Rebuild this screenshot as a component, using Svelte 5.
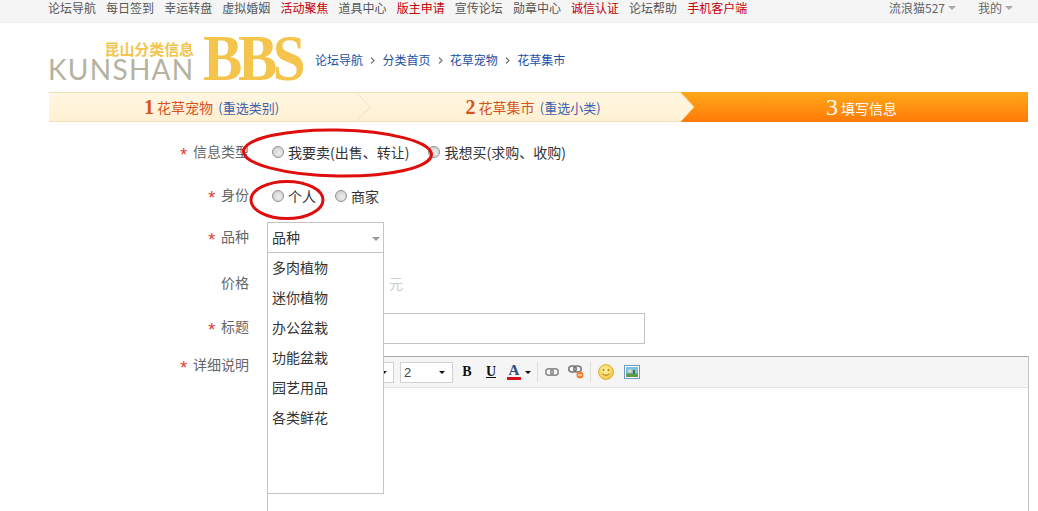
<script>
  const nav = [
    ['论坛导航', 0], ['每日签到', 0], ['幸运转盘', 0], ['虚拟婚姻', 0], ['活动聚焦', 1], ['道具中心', 0],
    ['版主申请', 1], ['宣传论坛', 0], ['勋章中心', 0], ['诚信认证', 1], ['论坛帮助', 0], ['手机客户端', 1]
  ];
  const crumbs = ['论坛导航', '分类首页', '花草宠物', '花草集市'];
  const options = ['多肉植物', '迷你植物', '办公盆栽', '功能盆栽', '园艺用品', '各类鲜花'];
</script>

<div class="page">
  <header class="topbar">
    <nav class="nav">
      {#each nav as [label, hot]}
        <span class:hot>{label}</span>
      {/each}
    </nav>
    <div class="user">
      <span class="menu">流浪猫527<i class="caret"></i></span>
      <span class="menu">我的<i class="caret"></i></span>
    </div>
  </header>

  <div class="brand">
    <div class="logo">
      <div class="logo-words">
        <span class="cn">昆山分类信息</span>
        <span class="en">KUNSHAN</span>
      </div>
      <span class="bbs">BBS</span>
    </div>
    <div class="crumbs">
      {#each crumbs as c, i}
        {#if i > 0}<svg class="sep" width="5" height="7" viewBox="0 0 5 7"><path d="M1 .5 4 3.5 1 6.5" fill="none" stroke="#777" stroke-width="1.2"/></svg>{/if}
        <span>{c}</span>
      {/each}
    </div>
  </div>

  <div class="steps">
    <div class="step one"><b>1</b> 花草宠物 <em>(重选类别)</em></div>
    <div class="step two"><b>2</b> 花草集市 <em>(重选小类)</em></div>
    <div class="step three"><b>3</b> 填写信息</div>
    <svg class="chev c1" width="16" height="30" viewBox="0 0 16 30"><path d="M0 0 14 15 0 30" fill="none" stroke="#f1e0bd"/></svg>
    <svg class="chev c2" width="16" height="30" viewBox="0 0 16 30"><path d="M0 0 14 15 0 30Z" fill="#fff4dc"/><path d="M0 0 14 15 0 30" fill="none" stroke="#f5dfb4"/></svg>
  </div>

  <form class="form">
    <div class="row r-type">
      <div class="label"><i>*</i> 信息类型</div>
      <div class="field">
        <label class="radio"><span class="dot"></span>我要卖(出售、转让)</label>
        <label class="radio"><span class="dot"></span>我想买(求购、收购)</label>
      </div>
    </div>
    <div class="row r-id">
      <div class="label"><i>*</i> 身份</div>
      <div class="field">
        <label class="radio"><span class="dot"></span>个人</label>
        <label class="radio second"><span class="dot"></span>商家</label>
      </div>
    </div>
    <div class="row r-kind">
      <div class="label"><i>*</i> 品种</div>
      <div class="field">
        <div class="select">品种<i class="caret dark"></i></div>
      </div>
    </div>
    <div class="row r-price">
      <div class="label">价格</div>
      <div class="field"><div class="price"></div><span class="unit">元</span></div>
    </div>
    <div class="row r-title">
      <div class="label"><i>*</i> 标题</div>
      <div class="field"><div class="title-input"></div></div>
    </div>
    <div class="row r-detail">
      <div class="label"><i>*</i> 详细说明</div>
      <div class="editor">
        <div class="toolbar">
          <div class="tsel small"><i class="caret black"></i></div>
          <div class="tsel size">2<i class="caret black"></i></div>
          <span class="tb b">B</span>
          <span class="tb u">U</span>
          <span class="tb a">A</span><i class="caret black acaret"></i>
          <span class="rule"></span>
          <svg class="ic link" width="14" height="8" viewBox="0 0 14 8"><rect x=".8" y=".8" width="7.400" height="6.400" rx="3" fill="none" stroke="#888" stroke-width="1.500"/><rect x="5.800" y=".8" width="7.400" height="6.400" rx="3" fill="none" stroke="#888" stroke-width="1.500"/></svg>
          <svg class="ic unlink" width="16" height="14" viewBox="0 0 16 14"><rect x=".8" y="1" width="7.400" height="6" rx="3" fill="none" stroke="#777" stroke-width="1.500"/><rect x="5.800" y="1" width="7.400" height="6" rx="3" fill="none" stroke="#777" stroke-width="1.500"/><circle cx="12" cy="10" r="3.500" fill="#ee8133"/><path d="M10 10h4" stroke="#fff"/></svg>
          <span class="rule"></span>
          <svg class="ic smile" width="16" height="16" viewBox="0 0 16 16"><defs><radialGradient id="sm" cx=".45" cy=".4" r=".7"><stop offset="0" stop-color="#fff6a8"/><stop offset="1" stop-color="#f3bd2c"/></radialGradient></defs><circle cx="8" cy="8" r="7.500" fill="url(#sm)" stroke="#d9a12b" stroke-width=".8"/><circle cx="5.600" cy="6" r=".9" fill="#a8771a"/><circle cx="10.400" cy="6" r=".9" fill="#a8771a"/><path d="M4.500 10q3.500 3 7 0" fill="none" stroke="#a8771a"/></svg>
          <svg class="ic" width="16" height="14" viewBox="0 0 16 14"><rect x=".5" y=".5" width="15" height="13" fill="#fff" stroke="#6f9bc7"/><rect x="2" y="2" width="12" height="10" fill="#7fc0e8"/><rect x="2" y="8.500" width="12" height="3.500" fill="#5f9b4a"/><circle cx="6" cy="6" r="1.800" fill="#f0e08a"/><rect x="9" y="5" width="2" height="4" fill="#3f7a3a"/></svg>
        </div>
      </div>
    </div>

    <ul class="dropdown">
      {#each options as o}<li>{o}</li>{/each}
    </ul>

    <svg class="marks" width="1038" height="511" viewBox="0 0 1038 511">
      <ellipse cx="337.500" cy="153" rx="94" ry="23" fill="none" stroke="#e00d0d" stroke-width="3" transform="rotate(1 337.500 153)"/>
      <ellipse cx="287" cy="200" rx="36" ry="18.500" fill="none" stroke="#e00d0d" stroke-width="3"/>
    </svg>
  </form>
</div>

<style>
  :global(body) {
    margin: 0;
    background: #fff;
  }
  .page {
    width: 1038px;
    height: 511px;
    overflow: hidden;
    position: relative;
    font-family: "Noto Sans CJK SC", "Liberation Sans", sans-serif;
    font-size: 12px;
    color: #555;
  }
  .topbar {
    height: 23px;
    box-sizing: border-box;
    background: #f5f5f5;
    border-bottom: 1px solid #eee;
    display: flex;
    justify-content: space-between;
    padding-left: 48px;
    line-height: 15px;
  }
  .nav {
    display: flex;
    gap: 10.1px;
  }
  .hot {
    color: #c3000b;
  }
  .user {
    display: flex;
    gap: 22px;
    padding-right: 25px;
  }
  .menu {
    display: flex;
    align-items: center;
    height: 15px;
    color: #666;
  }
  .caret {
    width: 0;
    height: 0;
    border: 4px solid transparent;
    border-top-color: #aaa;
    border-bottom-width: 0;
    margin-left: 3px;
  }
  .brand {
    height: 69px;
    display: flex;
    align-items: flex-start;
    padding-left: 48px;
  }
  .logo {
    display: flex;
    width: 257px;
    height: 50px;
    margin-top: 12px;
    color: #f4c44c;
  }
  .logo-words {
    width: 146px;
    display: flex;
    flex-direction: column;
    align-items: flex-end;
    padding-top: 6px;
  }
  .cn {
    font-size: 15px;
    line-height: 15px;
    font-weight: 700;
    letter-spacing: -.1px;
    width: 89px;
    white-space: nowrap;
  }
  .en {
    font-family: "Lato", sans-serif;
    font-size: 28px;
    line-height: 24px;
    margin-top: 1px;
    color: #b5b3a0;
    letter-spacing: 1.3px;
    white-space: nowrap;
    margin-right: -1px;
  }
  .bbs {
    margin-left: 9px;
    margin-top: -1px;
    height: 48px;
    font-family: "Liberation Serif", serif;
    font-weight: 700;
    font-size: 66px;
    line-height: 48px;
    letter-spacing: -5px;
    transform: scaleX(.895);
    transform-origin: left;
  }
  .crumbs {
    display: flex;
    align-items: center;
    gap: 7.2px;
    margin-top: 29px;
    margin-left: 10px;
    line-height: 16px;
    color: #1e4fa3;
  }
  .steps {
    position: relative;
    display: grid;
    grid-template-columns: 307px 324px 348px;
    margin-left: 49px;
    height: 30px;
    line-height: 30px;
    text-align: center;
    font-size: 14px;
    color: #d8531c;
  }
  .step {
    box-sizing: border-box;
    height: 30px;
    background: linear-gradient(#fff6e2, #fff0d2);
    border-top: 1px solid #f1dfb8;
    border-bottom: 1px solid #f1dfb8;
    line-height: 28px;
    white-space: nowrap;
  }
  .step.one {
    padding-left: 18px;
  }
  .step.two {
    padding-left: 30px;
  }
  .step b {
    font-family: "Liberation Serif", serif;
    font-size: 20px;
    vertical-align: -1px;
  }
  .step em {
    font-style: normal;
    font-size: 13px;
    color: #3c62ad;
    margin-left: 2px;
  }
  .step.three {
    border: 0;
    line-height: 30px;
    background: linear-gradient(#ffa81a, #ff7a06);
    color: #fff;
    padding-left: 15px;
  }
  .step.three b {
    font-weight: 400;
    font-size: 24px;
  }
  .chev {
    position: absolute;
    top: 0;
  }
  .c1 {
    left: 307px;
  }
  .c2 {
    left: 631px;
  }
  .form {
    display: flex;
    flex-direction: column;
    font-size: 14px;
    color: #444;
  }
  .row {
    display: flex;
    align-items: flex-start;
  }
  .label {
    width: 249px;
    box-sizing: border-box;
    text-align: right;
    color: #666;
    line-height: 18px;
    white-space: pre;
  }
  .label i {
    display: inline-block;
    width: 8px;
    text-align: center;
    font: 18px/0 "Liberation Sans", sans-serif;
    vertical-align: -4px;
    color: #e8392a;
    margin-right: 2px;
  }
  .field {
    display: flex;
    align-items: flex-start;
    padding-left: 18px;
  }
  .r-type {
    height: 43px;
    padding-top: 20px;
  }
  .r-id {
    height: 42px;
  }
  .r-kind {
    height: 46px;
  }
  .r-price {
    height: 44px;
  }
  .r-title {
    height: 38px;
  }
  .radio {
    display: inline-flex;
    align-items: center;
    line-height: 20px;
    color: #333;
    margin-right: 4px;
    white-space: nowrap;
  }
  .r-type .field, .r-id .field {
    padding-left: 23px;
  }
  .r-id .field {
    padding-top: 1px;
  }
  .r-type .radio:first-child {
    margin-right: 19px;
  }
  .second {
    margin-left: 15px;
  }
  .dot {
    box-sizing: border-box;
    width: 12px;
    height: 12px;
    border-radius: 50%;
    margin-right: 4px;
    border: 1px solid #8f8f8f;
    background: radial-gradient(circle at 60% 60%, #eee, #c8c8c8);
  }
  .select {
    position: relative;
    box-sizing: border-box;
    width: 117px;
    height: 31px;
    border: 1px solid #c4c4c4;
    padding-left: 4px;
    line-height: 28px;
    color: #333;
    margin-top: -5px;
  }
  .caret.dark {
    position: absolute;
    right: 3px;
    top: 14px;
    border-width: 4px 4px 0;
    border-top-color: #999;
  }
  .price {
    width: 117px;
    height: 31px;
    box-sizing: border-box;
    border-right: 1px solid #ddd;
    margin-top: -8px;
  }
  .unit {
    margin-left: 5px;
    color: #ccc;
    line-height: 20px;
    margin-top: 0;
  }
  .title-input {
    box-sizing: border-box;
    width: 378px;
    height: 31px;
    border: 1px solid #c4c4c4;
    margin-top: -4px;
  }
  .editor {
    box-sizing: border-box;
    margin-left: 18px;
    margin-top: 1px;
    width: 762px;
    height: 200px;
    border: 1px solid #c4c4c4;
    border-top-color: #a8a8a8;
  }
  .toolbar {
    height: 31px;
    box-sizing: border-box;
    background: #f5f5f5;
    border-bottom: 1px solid #e4e4e4;
    display: flex;
    align-items: center;
    padding-left: 111px;
    color: #222;
  }
  .tsel {
    position: relative;
    box-sizing: border-box;
    height: 21px;
    background: #fff;
    border: 1px solid #d2d2d2;
    font: 13px/19px "Liberation Sans", sans-serif;
    padding-left: 3px;
    color: #444;
  }
  .tsel.small {
    width: 15px;
    margin-right: 6px;
    border-left: 0;
  }
  .tsel.size {
    width: 53px;
    margin-right: 8px;
  }
  .caret.black {
    position: absolute;
    right: 7px;
    top: 8px;
    border-width: 3px 3px 0;
    border-top-color: #111;
    margin: 0;
  }
  .tsel.small .caret.black {
    right: 6px;
  }
  .tb {
    width: 12px;
    flex: none;
    text-align: center;
    font: 700 14px/16px "Liberation Serif", serif;
    color: #111;
  }
  .b {
    margin-right: 12px;
  }
  .u {
    text-decoration: underline;
    margin-right: 10px;
  }
  .a {
    width: 14px;
    color: #2e4a80;
    border-bottom: 3px solid #d5121b;
    font-size: 15px;
    line-height: 13px;
  }
  .caret.acaret {
    position: static;
    margin: 0 6px 0 4px;
  }
  .rule {
    width: 1px;
    height: 20px;
    background: #ddd;
    margin-right: 7px;
    flex: none;
  }
  .ic {
    flex: none;
  }
  .ic.link {
    margin-right: 9px;
  }
  .ic.unlink {
    margin-right: 6px;
  }
  .ic.smile {
    margin-right: 10px;
  }
  .dropdown {
    position: absolute;
    left: 267px;
    top: 252px;
    box-sizing: border-box;
    width: 117px;
    height: 242px;
    margin: 0;
    padding: 0 0 0 4px;
    list-style: none;
    background: #fff;
    border: 1px solid #c4c4c4;
    color: #333;
    line-height: 30px;
  }
  .dropdown li:first-child {
    margin-top: -1px;
  }
  .marks {
    position: absolute;
    left: 0;
    top: 0;
    pointer-events: none;
  }
</style>
